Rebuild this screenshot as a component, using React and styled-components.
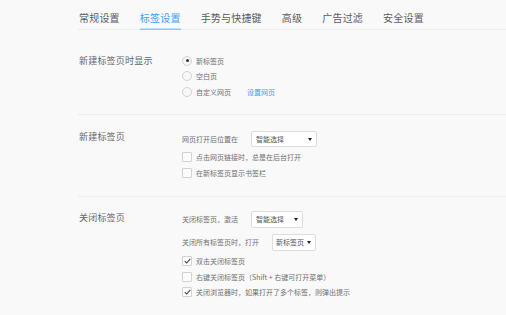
import React from "react";
import styled, { createGlobalStyle } from "styled-components";

const Global = createGlobalStyle`
  html, body { margin: 0; padding: 0; background: #f9f9f9; }
  body {
    font-family: "Noto Sans CJK SC", "Noto Sans", sans-serif;
    color: #666;
    width: 506px;
    height: 315px;
    overflow: hidden;
  }
`;

const Page = styled.div`
  padding-left: 78px;
`;

const TabBar = styled.div`
  display: flex;
  gap: 20px;
  height: 29px;
  border-bottom: 1px solid #ededed;
  padding-left: 1px;
`;

const Tab = styled.div`
  display: flex;
  align-items: center;
  padding-top: 5px;
  font-size: 10px;
  letter-spacing: 0.2px;
  color: ${(p) => (p.$active ? "#4a9cf2" : "#5c5c5c")};
  box-shadow: ${(p) => (p.$active ? "inset 0 -1.5px 0 #8fc4f7" : "none")};
  margin-bottom: -1px;
`;

const Section = styled.div`
  display: grid;
  grid-template-columns: 104px 1fr;
  padding: ${(p) => p.$pad};
  border-bottom: ${(p) => (p.$last ? "none" : "1px solid #ededed")};
`;

const Label = styled.div`
  font-size: 9px;
  color: #666;
  padding-left: 1px;
  line-height: ${(p) => p.$lh}px;
  letter-spacing: 0.2px;
`;

const Options = styled.div`
  display: flex;
  flex-direction: column;
`;

const Row = styled.div`
  display: flex;
  align-items: center;
  height: ${(p) => p.$h}px;
  font-size: 7px;
  color: #707070;
`;

const Text = styled.span`
  margin-left: 4px;
`;

const LeadText = styled.span`
  margin-right: 13px;
`;

const Link = styled.span`
  margin-left: 16px;
  color: #4a9cf2;
`;

const RadioCircle = styled.span`
  width: 8px;
  height: 8px;
  border-radius: 50%;
  border: 1px solid #d2d2d2;
  background: #f7f7f7;
  display: flex;
  align-items: center;
  justify-content: center;
  flex: none;
  &::after {
    content: "";
    width: 3px;
    height: 3px;
    border-radius: 50%;
    background: ${(p) => (p.$checked ? "#333" : "transparent")};
  }
`;

const Box = styled.span`
  width: 8px;
  height: 8px;
  border: 1px solid #d2d2d2;
  border-radius: 1px;
  background: #fbfbfb;
  display: flex;
  align-items: center;
  justify-content: center;
  flex: none;
`;

const Select = styled.div`
  position: relative;
  display: flex;
  align-items: center;
  width: ${(p) => p.$w}px;
  height: ${(p) => p.$h}px;
  box-sizing: border-box;
  border: 1px solid #dcdcdc;
  border-radius: 2px;
  background: #fff;
  padding-left: ${(p) => p.$pl}px;
  font-size: 7px;
  color: #555;
  &::after {
    content: "";
    position: absolute;
    right: 4px;
    top: 50%;
    margin-top: -1px;
    border-left: 2.5px solid transparent;
    border-right: 2.5px solid transparent;
    border-top: 3px solid #222;
  }
`;

const Radio = ({ checked, children, link }) => (
  <Row $h={15.5}>
    <RadioCircle $checked={checked} />
    <Text>{children}</Text>
    {link && <Link>{link}</Link>}
  </Row>
);

const Check = ({ checked, children }) => (
  <Row $h={15.5}>
    <Box>
      {checked && (
        <svg width="7" height="6" viewBox="0 0 7 6">
          <path d="M0.8 3.2 L2.7 5 L6.3 0.9" fill="none" stroke="#444" strokeWidth="1.1" />
        </svg>
      )}
    </Box>
    <Text>{children}</Text>
  </Row>
);

const tabs = ["常规设置", "标签设置", "手势与快捷键", "高级", "广告过滤", "安全设置"];

export default function App() {
  return (
    <Page>
      <Global />
      <TabBar>
        {tabs.map((t, i) => (
          <Tab key={t} $active={i === 1}>
            {t}
          </Tab>
        ))}
      </TabBar>

      <Section $pad="23px 0 14px">
        <Label $lh={15.5}>新建标签页时显示</Label>
        <Options>
          <Radio checked>新标签页</Radio>
          <Radio>空白页</Radio>
          <Radio link="设置网页">自定义网页</Radio>
        </Options>
      </Section>

      <Section $pad="14px 0 15px">
        <Label $lh={16}>新建标签页</Label>
        <Options>
          <Row $h={21}>
            <LeadText>网页打开后位置在</LeadText>
            <Select $w={66} $h={16} $pl={4}>智能选择</Select>
          </Row>
          <Check>点击网页链接时，总是在后台打开</Check>
          <Check>在新标签页显示书签栏</Check>
        </Options>
      </Section>

      <Section $pad="11px 0 0" $last>
        <Label $lh={20}>关闭标签页</Label>
        <Options>
          <Row $h={23}>
            <LeadText>关闭标签页，激活</LeadText>
            <Select $w={52} $h={17} $pl={4}>智能选择</Select>
          </Row>
          <Row $h={23}>
            <LeadText>关闭所有标签页时，打开</LeadText>
            <Select $w={44} $h={17} $pl={3}>新标签页</Select>
          </Row>
          <Check checked>双击关闭标签页</Check>
          <Check>右键关闭标签页（Shift + 右键可打开菜单）</Check>
          <Check checked>关闭浏览器时，如果打开了多个标签，则弹出提示</Check>
        </Options>
      </Section>
    </Page>
  );
}
